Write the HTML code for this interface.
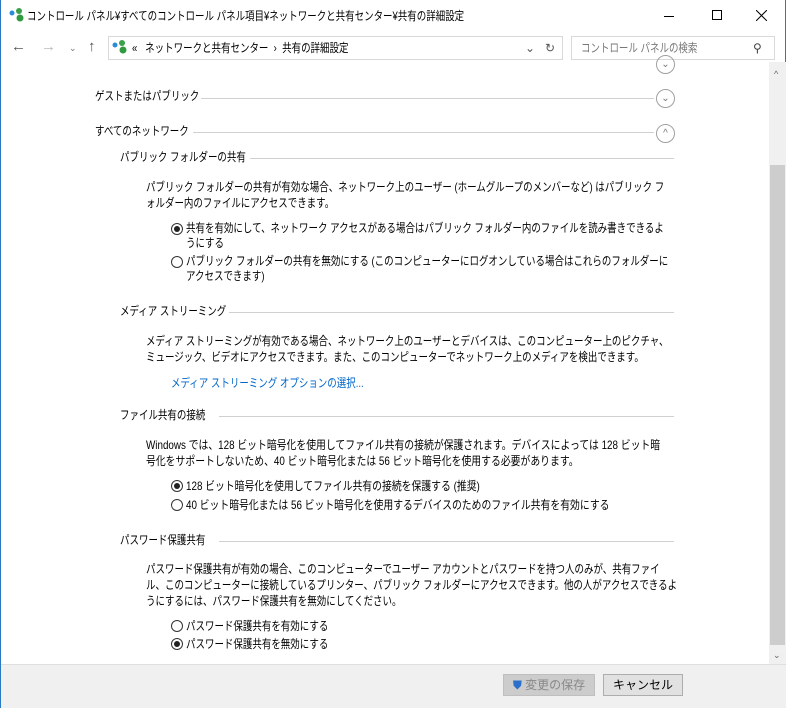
<!DOCTYPE html>
<html><head><meta charset="utf-8"><style>
*{margin:0;padding:0;box-sizing:border-box}
body{width:786px;height:708px;overflow:hidden;background:#fff;font-family:"Liberation Sans","Noto Sans CJK JP",sans-serif;font-size:12px;color:#000;position:relative}
.win{position:absolute;inset:0;border:1px solid #2b79c0;border-top:none}
.a{position:absolute;white-space:nowrap;line-height:16px;transform:scaleX(0.79);transform-origin:0 0}
.l{transform:scaleX(0.82)}
.hl{position:absolute;height:1px;background:#d0d0d0}
.circ{position:absolute;width:19px;height:19px;border:1px solid #a0a0a0;border-radius:50%;color:#777;font-size:10px;text-align:center;line-height:17px}
.rad{position:absolute;width:12px;height:12px;border:1px solid #333;border-radius:50%;background:#fff}
.rad.on::after{content:"";position:absolute;left:2px;top:2px;width:6px;height:6px;border-radius:50%;background:#222}
.btn{position:absolute;height:22px;border:1px solid #adadad;background:#e1e1e1;text-align:center;line-height:20px}
.ic{position:absolute;white-space:nowrap;line-height:16px}
</style></head><body><div class="win">
<svg style="position:absolute;left:8px;top:8px" width="16" height="14"><circle cx="3" cy="5" r="2.5" fill="#2a8bd8"/><circle cx="10" cy="3" r="3" fill="#3aa04a"/><circle cx="11" cy="10" r="3.5" fill="#2f9a3e"/></svg>
<div class="a" style="left:26px;top:8px">コントロール パネル¥すべてのコントロール パネル項目¥ネットワークと共有センター¥共有の詳細設定</div>
<div style="position:absolute;left:663px;top:16px;width:10px;height:1px;background:#000"></div>
<div style="position:absolute;left:711px;top:10px;width:10px;height:10px;border:1px solid #000"></div>
<svg style="position:absolute;left:755px;top:10px" width="11" height="11"><path d="M0 0L11 11M11 0L0 11" stroke="#000" stroke-width="1"/></svg>
<div class="ic" style="left:10px;top:39px;color:#555;font-size:15px">←</div>
<div class="ic" style="left:40px;top:39px;color:#bbb;font-size:15px">→</div>
<div class="ic" style="left:68px;top:40px;color:#777;font-size:9px">⌄</div>
<div class="ic" style="left:87px;top:39px;color:#555;font-size:15px">↑</div>
<div style="position:absolute;left:107px;top:36px;width:455px;height:24px;border:1px solid #d9d9d9"></div>
<svg style="position:absolute;left:111px;top:40px" width="16" height="14"><circle cx="3" cy="5" r="2.5" fill="#2a8bd8"/><circle cx="10" cy="3" r="3" fill="#3aa04a"/><circle cx="11" cy="10" r="3.5" fill="#2f9a3e"/></svg>
<div class="a" style="left:131px;top:40px">«&nbsp;&nbsp; ネットワークと共有センター &nbsp;›&nbsp; 共有の詳細設定</div>
<div class="ic" style="left:524px;top:40px;color:#555">⌄</div>
<div class="ic" style="left:544px;top:40px;color:#555">↻</div>
<div style="position:absolute;left:570px;top:36px;width:204px;height:24px;border:1px solid #d9d9d9"></div>
<div class="a" style="left:580px;top:40px;color:#777">コントロール パネルの検索</div>
<div class="ic" style="left:752px;top:40px;color:#444">⚲</div>
<div style="position:absolute;left:768px;top:62px;width:17px;height:602px;background:#f0f0f0"></div>
<div style="position:absolute;left:769px;top:165px;width:15px;height:480px;background:#cdcdcd"></div>
<div class="ic" style="left:773px;top:66px;color:#666;font-size:9px">^</div>
<div class="ic" style="left:772px;top:647px;color:#666;font-size:9px">⌄</div>
<div class="circ" style="left:655px;top:55px">⌄</div>
<div class="a" style="left:94px;top:88px">ゲストまたはパブリック</div><div class="hl" style="left:200px;top:98px;width:453px"></div><div class="circ" style="left:655px;top:89px">⌄</div>
<div class="a" style="left:94px;top:123px">すべてのネットワーク</div><div class="hl" style="left:192px;top:132px;width:461px"></div><div class="circ" style="left:655px;top:124px">^</div>
<div class="a" style="left:119px;top:149px">パブリック フォルダーの共有</div><div class="hl" style="left:249px;top:158px;width:424px"></div>
<div class="a" style="left:145px;top:179px">パブリック フォルダーの共有が有効な場合、ネットワーク上のユーザー (ホームグループのメンバーなど) はパブリック フ<br>ォルダー内のファイルにアクセスできます。</div>
<div class="rad on" style="left:170px;top:223px"></div><div class="a" style="left:185px;top:221px;line-height:15px">共有を有効にして、ネットワーク アクセスがある場合はパブリック フォルダー内のファイルを読み書きできるよ<br>うにする</div>
<div class="rad" style="left:170px;top:256px"></div><div class="a" style="left:185px;top:254px;line-height:15px">パブリック フォルダーの共有を無効にする (このコンピューターにログオンしている場合はこれらのフォルダーに<br>アクセスできます)</div>
<div class="a" style="left:119px;top:303px">メディア ストリーミング</div><div class="hl" style="left:228px;top:312px;width:445px"></div>
<div class="a" style="left:145px;top:333px">メディア ストリーミングが有効である場合、ネットワーク上のユーザーとデバイスは、このコンピューター上のピクチャ、<br>ミュージック、ビデオにアクセスできます。また、このコンピューターでネットワーク上のメディアを検出できます。</div>
<div class="a" style="left:170px;top:375px;color:#0066cc">メディア ストリーミング オプションの選択...</div>
<div class="a" style="left:119px;top:407px">ファイル共有の接続</div><div class="hl" style="left:218px;top:416px;width:455px"></div>
<div class="a l" style="left:145px;top:437px">Windows では、128 ビット暗号化を使用してファイル共有の接続が保護されます。デバイスによっては 128 ビット暗<br>号化をサポートしないため、40 ビット暗号化または 56 ビット暗号化を使用する必要があります。</div>
<div class="rad on" style="left:170px;top:480px"></div><div class="a l" style="left:185px;top:478px">128 ビット暗号化を使用してファイル共有の接続を保護する (推奨)</div>
<div class="rad" style="left:170px;top:499px"></div><div class="a l" style="left:185px;top:497px">40 ビット暗号化または 56 ビット暗号化を使用するデバイスのためのファイル共有を有効にする</div>
<div class="a" style="left:119px;top:532px">パスワード保護共有</div><div class="hl" style="left:218px;top:541px;width:455px"></div>
<div class="a" style="left:145px;top:561px">パスワード保護共有が有効の場合、このコンピューターでユーザー アカウントとパスワードを持つ人のみが、共有ファイ<br>ル、このコンピューターに接続しているプリンター、パブリック フォルダーにアクセスできます。他の人がアクセスできるよ<br>うにするには、パスワード保護共有を無効にしてください。</div>
<div class="rad" style="left:170px;top:620px"></div><div class="a" style="left:185px;top:618px">パスワード保護共有を有効にする</div>
<div class="rad on" style="left:170px;top:638px"></div><div class="a" style="left:185px;top:636px">パスワード保護共有を無効にする</div>
<div style="position:absolute;left:0;top:664px;width:785px;height:44px;background:#f0f0f0;border-top:1px solid #dfdfdf"></div>
<div class="btn" style="left:502px;top:674px;width:92px;color:#888;border-color:#bfbfbf;background:#ccc"><span style="color:#2a6fc9">⛊</span> 変更の保存</div>
<div class="btn" style="left:602px;top:674px;width:80px">キャンセル</div>
</div></body></html>
